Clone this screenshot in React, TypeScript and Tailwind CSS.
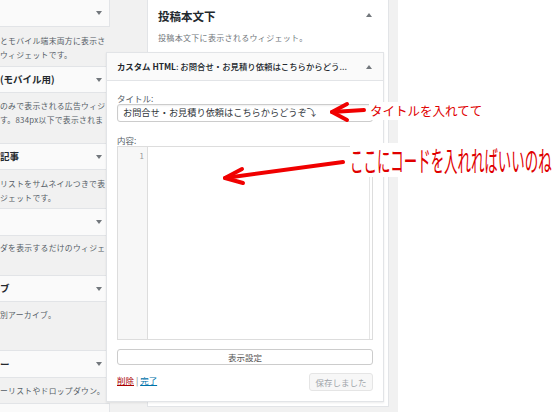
import React from 'react';

// Small widget toggle arrow (▼ / ▲)
const Arrow: React.FC<{ up?: boolean; className?: string }> = ({ up, className }) => (
    <svg width="6" height="4" viewBox="0 0 6 4" className={className}>
        {up ? <path d="M0 4 L3 0 L6 4 Z" fill="#72777c" /> : <path d="M0 0 L6 0 L3 4 Z" fill="#72777c" />}
    </svg>
);

interface WidgetRowProps {
    title: string;
    lines: string[];
    headerClass: string;
    descClass: string;
}

const WidgetRow: React.FC<WidgetRowProps> = ({ title, lines, headerClass, descClass }) => (
    <>
        <div className={`w-[110px] shrink-0 bg-[#fafafa] border-y border-r border-[#e2e4e7] flex items-center justify-between pr-[7px] ${headerClass}`}>
            <span className="text-[9.5px] font-bold text-[#23282d] whitespace-nowrap">{title}</span>
            <Arrow />
        </div>
        <div className={`w-[110px] shrink-0 text-[7.8px] leading-[14px] tracking-[0.04em] text-[#555d66] whitespace-nowrap overflow-hidden ${descClass}`}>
            {lines.map((l, i) => <div key={i}>{l}</div>)}
        </div>
    </>
);

export default function App() {
    return (
        <div className="relative w-[552px] h-[412px] overflow-hidden flex bg-white font-['Noto_Sans_CJK_JP','Noto_Sans',sans-serif]">
            {/* Available widgets (left, cut off) */}
            <div className="w-[147px] h-full shrink-0 bg-[#f1f1f1] flex flex-col">
                <WidgetRow title="" lines={['とモバイル端末両方に表示さ', 'ウィジェットです。']} headerClass="h-[27px] border-t-0" descClass="h-[39px] pt-[7px]" />
                <WidgetRow title="(モバイル用)" lines={['のみで表示される広告ウィジ', 'す。834px以下で表示されま']} headerClass="h-[27px]" descClass="h-[50px] pt-[6px]" />
                <WidgetRow title="記事" lines={['リストをサムネイルつきで表', 'ジェットです。']} headerClass="h-[27px]" descClass="h-[38px] pt-[7px]" />
                <WidgetRow title="" lines={['ダを表示するだけのウィジェ']} headerClass="h-[28px]" descClass="h-[39px] pt-[5px]" />
                <WidgetRow title="ブ" lines={['別アーカイブ。']} headerClass="h-[27px]" descClass="h-[48px] pt-[6px]" />
                <WidgetRow title="ー" lines={['ーリストやドロップダウン。']} headerClass="h-[28px]" descClass="h-[25px] pt-[6px]" />
                <div className="w-[110px] h-[20px] bg-[#fafafa] border-t border-r border-[#e2e4e7]" />
            </div>

            {/* Sidebar: 投稿本文下 */}
            <div className="w-[251px] h-full shrink-0 bg-[#f1f1f1] pr-[9px]">
                <div className="h-[407px] bg-white border-x border-b border-[#e2e4e7] flex flex-col">
                    <div className="h-[32px] pt-[8px] pl-[10px] pr-[16px] flex items-start justify-between">
                        <span className="text-[11.5px] leading-[16px] font-bold text-[#23282d]">投稿本文下</span>
                        <Arrow up className="mt-[5px]" />
                    </div>
                    <div className="h-[20px] pl-[10px] text-[8px] leading-[12px] tracking-[0.04em] text-[#72777c]">投稿本文下に表示されるウィジェット。</div>

                    {/* Expanded Custom HTML widget */}
                    <div className="relative z-10 ml-[-42px] mr-[4px] bg-white border border-[#e2e4e7] shadow-[0_1px_2px_rgba(0,0,0,0.08)] flex flex-col">
                        <div className="h-[28px] bg-[#fafafa] border-b border-[#e2e4e7] flex items-center justify-between pl-[10px] pr-[11px]">
                            <span className="text-[8.4px] font-bold text-[#23282d] whitespace-nowrap">カスタム HTML<span className="font-medium">: お問合せ・お見積り依頼はこちらからどう...</span></span>
                            <Arrow up />
                        </div>
                        <div className="px-[10px] pt-[11px] pb-[10px] flex flex-col">
                            <div className="h-[12px] text-[8.5px] leading-[12px] text-[#555d66]">タイトル:</div>
                            <div className="h-[18px] border border-[#ccc] rounded-[3px] flex items-center pl-[5px] text-[9.2px] text-[#32373c] whitespace-nowrap overflow-hidden shadow-[inset_0_1px_2px_rgba(0,0,0,0.07)]">
                                お問合せ・お見積り依頼はこちらからどうぞ⤵
                            </div>
                            <div className="h-[12px] mt-[12px] text-[8.5px] leading-[12px] text-[#555d66]">内容:</div>
                            <div className="h-[194px] border border-[#ddd] flex">
                                <div className="w-[30px] bg-[#f7f7f7] border-r border-[#ddd] text-right pr-[3px] pt-[3px] text-[8px] leading-[12px] text-[#999]">1</div>
                                <div className="flex-1" />
                                <div className="w-[3px] border-l border-[#e5e5e5]" />
                            </div>
                            <div className="h-[16px] mt-[9px] border border-[#ccc] rounded-[3px] flex items-center justify-center text-[8.5px] text-[#555]">表示設定</div>
                            <div className="mt-[8px] flex items-center justify-between">
                                <div className="text-[8.5px] -mt-[3px]">
                                    <span className="text-[#a00] underline">削除</span>
                                    <span className="text-[#72777c]"> | </span>
                                    <span className="text-[#0073aa] underline">完了</span>
                                </div>
                                <div className="w-[64px] h-[18px] bg-[#f7f7f7] border border-[#e5e5e5] rounded-[3px] flex items-center justify-center text-[8.5px] text-[#a0a5aa]">保存しました</div>
                            </div>
                        </div>
                    </div>
                </div>
            </div>

            <div className="flex-1 bg-white" />

            {/* Red annotations over the screenshot */}
            <svg className="absolute left-0 top-0 z-20" width="552" height="412" viewBox="0 0 552 412">
                <g stroke="#f00000" strokeWidth="4" strokeLinecap="round" strokeLinejoin="round" fill="none">
                    <path d="M364 110 L332 112" />
                    <path d="M347 104 L332 112 L347 120" />
                    <path d="M343 162 L225 178" />
                    <path d="M242 169 L225 178 L243 183" />
                </g>
            </svg>
            <div className="absolute left-[369px] top-[102px] z-20 bg-white px-[1px] text-[12.5px] leading-[18px] text-[#e00000] whitespace-nowrap">タイトルを入れてて</div>
            <div className="absolute left-[350px] top-[143px] z-20 bg-white origin-left scale-x-[0.48] text-[28px] leading-[34px] text-[#e00000] whitespace-nowrap">ここにコードを入れればいいのね</div>
        </div>
    );
}
